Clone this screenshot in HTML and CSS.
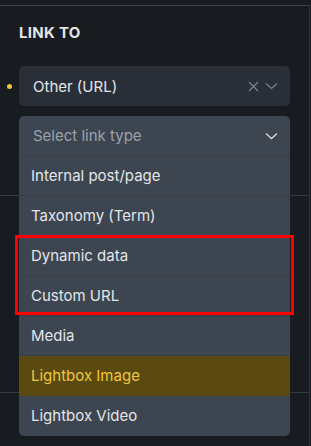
FILE: index.html
```html
<!DOCTYPE html>
<html lang="en">
  <head>
    <meta charset="UTF-8" />
    <meta name="viewport" content="width=device-width, initial-scale=1.0" />
    <title>Link to</title>
    <link rel="stylesheet" href="styles.css">
  </head>
  <body>
    <div class="panel">
      <section class="control">
        <h3 class="control-label">LINK TO</h3>
        <div class="control-row">
          <span class="changed-dot"></span>
          <div class="select">
            <span class="select-value">Other (URL)</span>
            <span class="select-icons">
              <svg width="11" height="11" viewBox="0 0 11 11"><path d="M1 1L10 10M10 1L1 10" stroke="#7d838b" stroke-width="1.2" fill="none"/></svg>
              <svg width="13" height="8" viewBox="0 0 13 8"><path d="M1 1.5L6.5 6.5L12 1.5" stroke="#7d838b" stroke-width="1.2" fill="none"/></svg>
            </span>
          </div>
        </div>
        <div class="dropdown-anchor">
          <div class="dropdown">
            <div class="dropdown-head">
              <span class="placeholder">Select link type</span>
              <svg width="13" height="8" viewBox="0 0 13 8"><path d="M1 1.5L6.5 6.5L12 1.5" stroke="#d6dadf" stroke-width="1.3" fill="none"/></svg>
            </div>
            <ul class="options">
              <li>Internal post/page</li>
              <li>Taxonomy (Term)</li>
              <li>Dynamic data</li>
              <li>Custom URL</li>
              <li>Media</li>
              <li class="active">Lightbox Image</li>
              <li>Lightbox Video</li>
            </ul>
          </div>
          <div class="highlight-box"></div>
        </div>
      </section>
      <section class="control empty"></section>
      <section class="control rest"></section>
    </div>
  </body>
</html>
```

FILE: styles.css
```css
body {
  margin: 0;
  padding-top: 5px;
  background-color: #181b1f;
  font-family: Inter, "Noto Sans", sans-serif;
  height: 441px;
  overflow: hidden;
}
.panel {
  width: 309px;
  height: 441px;
  border-top: 1px solid #3a4049;
  border-right: 1px solid #2c3139;
}
.control {
  padding: 0 19px;
  border-bottom: 1px solid #343a43;
}
.control:first-child {
  height: 189px;
}
.control.empty {
  height: 196px;
}
.control.rest {
  border-bottom: none;
}
.control-label {
  margin: 0;
  padding-top: 18px;
  font-size: 15px;
  line-height: 18px;
  font-weight: 700;
  letter-spacing: 0.3px;
  color: #e3e5e8;
}
.control-row {
  position: relative;
  margin-top: 24px;
}
.changed-dot {
  position: absolute;
  left: -12px;
  top: 18px;
  width: 5px;
  height: 5px;
  border-radius: 50%;
  background-color: #f4c430;
}
.select {
  display: flex;
  align-items: center;
  justify-content: space-between;
  height: 40px;
  padding: 0 12px 0 14px;
  border-radius: 5px;
  background-color: #2a2f37;
  color: #e3e6e9;
  font-size: 15px;
}
.select-icons {
  display: flex;
  align-items: center;
  gap: 6px;
}
.dropdown-anchor {
  position: relative;
}
.dropdown {
  position: absolute;
  top: 10px;
  left: 0;
  width: 271px;
  border-radius: 5px;
  background-color: #3d4550;
  overflow: hidden;
  z-index: 2;
}
.dropdown-head {
  display: flex;
  align-items: center;
  justify-content: space-between;
  height: 39px;
  padding: 0 12px 0 14px;
  border-bottom: 1px solid #373e48;
}
.placeholder {
  color: #9ca2aa;
  font-size: 15px;
}
.options {
  list-style: none;
  margin: 0;
  padding: 0;
}
.options li {
  height: 39px;
  line-height: 39px;
  padding: 0 12px;
  border-bottom: 1px solid #373e48;
  color: #e3e6e9;
  font-size: 15px;
}
.options li:last-child {
  height: 40px;
  border-bottom: none;
}
.options li.active {
  background-color: #5b4a10;
  color: #f2c63e;
  border-bottom-color: #5b4a10;
}
.highlight-box {
  position: absolute;
  top: 129px;
  left: -4px;
  width: 273px;
  height: 74px;
  border: 3px solid #ff0000;
  z-index: 3;
}
```
